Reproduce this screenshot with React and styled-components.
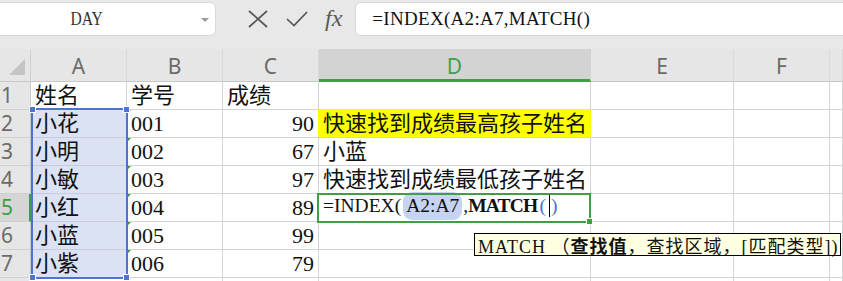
import React from "react";
import styled, { createGlobalStyle, css } from "styled-components";

const GlobalStyle = createGlobalStyle`
  html, body { margin: 0; padding: 0; background: #ffffff; }
  body { overflow: hidden; }
`;

const Page = styled.div`
  width: 843px;
  height: 281px;
  overflow: hidden;
  background: #e8e8e8;
  font-family: "Liberation Serif", "Noto Sans CJK SC", serif;
`;

const Toolbar = styled.div`
  display: flex;
  align-items: flex-start;
  height: 37px;
  padding-top: 2px;
  box-sizing: border-box;
`;

const NameBox = styled.div`
  position: relative;
  margin-left: -8px;
  width: 224px;
  height: 34px;
  box-sizing: border-box;
  background: #ffffff;
  border: 1px solid #d9d9d9;
  border-radius: 6px;
  display: flex;
  align-items: center;
  justify-content: center;
  padding-right: 34px;
  color: #333333;
  font-family: "Liberation Serif", serif;
  font-size: 19px;
`;

const Squeeze = styled.span`
  display: inline-block;
  transform: scaleX(${(p) => p.$x || 1});
`;

const DropArrow = styled.span`
  position: absolute;
  right: 6px;
  top: 15px;
  width: 0;
  height: 0;
  border-left: 4px solid transparent;
  border-right: 4px solid transparent;
  border-top: 4px solid #9a9a9a;
`;

const IconGroup = styled.div`
  display: flex;
  align-items: center;
  height: 34px;
  margin-left: 31px;
  gap: 17px;
  color: #555555;
`;

const Fx = styled.span`
  font-family: "Liberation Serif", serif;
  font-style: italic;
  font-size: 24px;
  color: #5a5a5a;
  line-height: 1;
  margin-top: -2px;
`;

const FormulaBox = styled.div`
  flex: 1;
  margin-left: 13px;
  margin-right: -10px;
  height: 34px;
  box-sizing: border-box;
  background: #ffffff;
  border: 1px solid #d9d9d9;
  border-radius: 6px;
  display: flex;
  align-items: center;
  padding-left: 16px;
  font-family: "Liberation Serif", serif;
  font-size: 19px;
  letter-spacing: 0.3px;
  color: #111111;
`;

const Strip = styled.div`
  height: 12px;
`;

const Sheet = styled.div`
  position: relative;
  display: grid;
  grid-template-columns: 31px 96px 96px 96px 272px 143px 96px 1fr;
  grid-template-rows: 33px repeat(8, 28px);
  background: #ffffff;
`;

const ColHeader = styled.div`
  box-sizing: border-box;
  background: ${(p) => (p.$active ? "#d3d3d3" : "#e6e6e6")};
  border-right: 1px solid ${(p) => (p.$active ? "#d3d3d3" : "#d9d9d9")};
  border-bottom: ${(p) => (p.$active ? "3px solid #3f9f46" : "1px solid #c8c8c8")};
  border-top: 1px solid ${(p) => (p.$active ? "#d3d3d3" : "#e6e6e6")};
  display: flex;
  align-items: center;
  justify-content: center;
  padding-top: ${(p) => (p.$active ? "2px" : "0")};
  font-family: "Noto Sans", "Liberation Sans", sans-serif;
  font-size: 21px;
  color: ${(p) => (p.$active ? "#3f9f46" : "#6b6b6b")};
`;

const Corner = styled.div`
  position: relative;
  box-sizing: border-box;
  background: #e6e6e6;
  border-right: 1px solid #d0d0d0;
  border-bottom: 1px solid #c8c8c8;
`;

const CornerTriangle = styled.span`
  position: absolute;
  right: 5px;
  bottom: 6px;
  width: 0;
  height: 0;
  border-left: 16px solid transparent;
  border-bottom: 16px solid #c4c4c4;
`;

const RowHeader = styled.div`
  box-sizing: border-box;
  background: ${(p) => (p.$active ? "#d6d6d6" : "#e6e6e6")};
  border-right: ${(p) => (p.$active ? "2px solid #3f9f46" : "1px solid #c8c8c8")};
  border-bottom: 1px solid #d0d0d0;
  display: flex;
  align-items: center;
  padding-left: 1px;
  font-family: "Noto Sans", "Liberation Sans", sans-serif;
  font-size: 21px;
  line-height: 1;
  color: ${(p) => (p.$active ? "#3f9f46" : "#6b6b6b")};
`;

const Cell = styled.div`
  position: relative;
  box-sizing: border-box;
  border-right: 1px solid #d4d4d4;
  border-bottom: 1px solid #d4d4d4;
  display: flex;
  align-items: flex-end;
  justify-content: ${(p) => (p.$num ? "flex-end" : "flex-start")};
  padding: 0 ${(p) => (p.$num ? "4px" : "3px")} 0 4px;
  font-family: "Liberation Serif", "Noto Sans CJK SC", serif;
  font-size: 22px;
  line-height: 26px;
  color: #111111;
  white-space: nowrap;
  ${(p) =>
    p.$sel &&
    css`
      background: #dbe2f4;
      border-bottom-color: #c7ccd8;
    `}
  ${(p) =>
    p.$yellow &&
    css`
      background: #ffff00;
      box-shadow: -1px -1px 0 #ffff00;
      border-right-color: #ffff00;
    `}
`;

const TextFlag = styled.span`
  position: absolute;
  left: 0;
  top: 0;
  width: 0;
  height: 0;
  border-top: 4px solid #2f9a36;
  border-right: 4px solid transparent;
`;

const Selection = styled.div`
  position: absolute;
  left: 31px;
  top: 59px;
  width: 97px;
  height: 171px;
  box-sizing: border-box;
  border: 2px solid #4f74cf;
  pointer-events: none;
  z-index: 2;
`;

const Handle = styled.span`
  position: absolute;
  width: 5px;
  height: 5px;
  background: #4f74cf;
  border: 1px solid #ffffff;
  ${(p) => (p.$top ? "top: -4px;" : "bottom: -4px;")}
  ${(p) => (p.$left ? "left: -4px;" : "right: -4px;")}
`;

const ActiveCell = styled.div`
  position: absolute;
  left: 317px;
  top: 144px;
  width: 274px;
  height: 30px;
  box-sizing: border-box;
  border: 2px solid #3f9f46;
  pointer-events: none;
  z-index: 2;
`;

const ActiveHandle = styled.span`
  position: absolute;
  right: -4px;
  bottom: -4px;
  width: 5px;
  height: 5px;
  background: #3f9f46;
  border: 1px solid #ffffff;
`;

const Formula = styled.span`
  font-family: "Liberation Serif", serif;
  font-size: 19.5px;
  color: #111111;
  display: inline-flex;
  align-items: center;
  margin-bottom: 1px;
`;

const RefPill = styled.span`
  background: #c7d4f1;
  border-radius: 9px;
  padding: 1px 3px;
  margin: 0 1px 0 2px;
`;

const Bold = styled.b`
  font-weight: 700;
`;

const TightBold = styled.b`
  font-weight: 700;
  letter-spacing: -0.8px;
`;

const Paren = styled.span`
  color: #4a70d0;
  margin: 0 ${(p) => p.$m || 0}px;
`;

const Caret = styled.span`
  display: inline-block;
  width: 1px;
  height: 22px;
  background: #000000;
  margin: 0 1px;
`;

const Tooltip = styled.div`
  position: absolute;
  left: 474px;
  top: 184px;
  width: 367px;
  height: 23px;
  box-sizing: border-box;
  background: #ffffe1;
  border: 1px solid #000000;
  display: flex;
  align-items: center;
  padding-left: 3px;
  font-family: "Liberation Serif", "Noto Sans CJK SC", serif;
  font-size: 18px;
  letter-spacing: 1px;
  color: #111111;
  white-space: nowrap;
  z-index: 3;
`;

const names = ["小花", "小明", "小敏", "小红", "小蓝", "小紫"];
const ids = ["001", "002", "003", "004", "005", "006"];
const scores = ["90", "67", "97", "89", "99", "79"];
const dTexts = ["快速找到成绩最高孩子姓名", "小蓝", "快速找到成绩最低孩子姓名"];

function XIcon() {
  return (
    <svg width="22" height="18" viewBox="0 0 22 18">
      <path d="M2 1 L20 17 M20 1 L2 17" stroke="#555" strokeWidth="1.7" fill="none" />
    </svg>
  );
}

function CheckIcon() {
  return (
    <svg width="22" height="18" viewBox="0 0 22 18">
      <path d="M1 9 L8 15.5 L21 2" stroke="#555" strokeWidth="1.7" fill="none" />
    </svg>
  );
}

export default function App() {
  const cols = ["A", "B", "C", "D", "E", "F", ""];
  return (
    <Page>
      <GlobalStyle />
      <Toolbar>
        <NameBox>
          <Squeeze $x={0.82}>DAY</Squeeze>
          <DropArrow />
        </NameBox>
        <IconGroup>
          <XIcon />
          <CheckIcon />
          <Fx>fx</Fx>
        </IconGroup>
        <FormulaBox>=INDEX(A2:A7,MATCH()</FormulaBox>
      </Toolbar>
      <Strip />
      <Sheet>
        <Corner>
          <CornerTriangle />
        </Corner>
        {cols.map((c, i) => (
          <ColHeader key={"h" + i} $active={c === "D"}>
            {c}
          </ColHeader>
        ))}

        <RowHeader>1</RowHeader>
        <Cell>姓名</Cell>
        <Cell>学号</Cell>
        <Cell>成绩</Cell>
        <Cell />
        <Cell />
        <Cell />
        <Cell />

        {names.map((n, i) => {
          const row = i + 2;
          const d = i < 3 ? dTexts[i] : null;
          return (
            <React.Fragment key={n}>
              <RowHeader $active={row === 5}>{row}</RowHeader>
              <Cell $sel>{n}</Cell>
              <Cell>
                <TextFlag />
                {ids[i]}
              </Cell>
              <Cell $num>{scores[i]}</Cell>
              <Cell $yellow={row === 2}>
                {d}
                {row === 5 && (
                  <Formula>
                    =INDEX(<RefPill>A2:A7</RefPill>,<TightBold>MATCH</TightBold>
                    <Paren $m={2}>(</Paren>
                    <Caret />
                    <Paren>)</Paren>
                  </Formula>
                )}
              </Cell>
              <Cell />
              <Cell />
              <Cell />
            </React.Fragment>
          );
        })}

        <RowHeader />
        <Cell />
        <Cell />
        <Cell />
        <Cell />
        <Cell />
        <Cell />
        <Cell />

        <Selection>
          <Handle $top $left />
          <Handle $top />
          <Handle $left />
          <Handle />
        </Selection>
        <ActiveCell>
          <ActiveHandle />
        </ActiveCell>

        <Tooltip>
          MATCH （<Bold>查找值</Bold>，查找区域，[匹配类型])
        </Tooltip>
      </Sheet>
    </Page>
  );
}
